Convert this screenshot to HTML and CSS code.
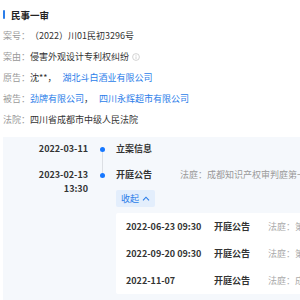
FILE: index.html
```html
<!DOCTYPE html>
<html lang="zh-CN">
<head>
    <meta charset="UTF-8">
    <title>民事一审</title>
    <link rel="stylesheet" href="styles.css">
</head>
<body>
    <div class="case">
        <div class="case-title">
            <span class="title-bar"></span>
            <h1>民事一审</h1>
        </div>

        <div class="info-row"><span class="label">案号：</span><span class="value">（2022）川01民初3296号</span></div>
        <div class="info-row">
            <span class="label">案由：</span><span class="value">侵害外观设计专利权纠纷</span>
            <svg class="info-icon" width="8" height="8" viewBox="0 0 8 8">
                <circle cx="4" cy="4" r="3.4" fill="none" stroke="#c8c8c8" stroke-width="0.8"/>
                <line x1="4" y1="3.4" x2="4" y2="6" stroke="#c8c8c8" stroke-width="0.8"/>
                <circle cx="4" cy="2.2" r="0.5" fill="#c8c8c8"/>
            </svg>
        </div>
        <div class="info-row"><span class="label">原告：</span><span class="value">沈**，</span><a class="link">湖北斗白酒业有限公司</a></div>
        <div class="info-row"><span class="label">被告：</span><a class="link">劲牌有限公司</a><span class="value">，</span><a class="link">四川永辉超市有限公司</a></div>
        <div class="info-row"><span class="label">法院：</span><span class="value">四川省成都市中级人民法院</span></div>

        <div class="timeline">
            <div class="event">
                <div class="event-date">2022-03-11</div>
                <div class="event-axis first">
                    <span class="axis-line top"></span>
                    <span class="axis-dot"></span>
                    <span class="axis-line bottom"></span>
                </div>
                <div class="event-body">
                    <div class="event-head"><span class="event-name">立案信息</span></div>
                </div>
            </div>

            <div class="event">
                <div class="event-date">2023-02-13<br>13:30</div>
                <div class="event-axis last">
                    <span class="axis-line top"></span>
                    <span class="axis-dot"></span>
                    <span class="axis-line bottom"></span>
                </div>
                <div class="event-body">
                    <div class="event-head">
                        <span class="event-name">开庭公告</span>
                        <span class="event-note">法庭：成都知识产权审判庭第一法庭</span>
                    </div>
                    <button class="collapse-btn">收起
                        <svg width="8" height="5" viewBox="0 0 8 5"><path d="M1 4.3 L4 1.2 L7 4.3" fill="none" stroke="#2b7de9" stroke-width="1.1"/></svg>
                    </button>
                    <div class="sub-list">
                        <div class="sub-row"><span class="sub-date">2022-06-23 09:30</span><span class="sub-name">开庭公告</span><span class="sub-note">法庭：第一法庭</span></div>
                        <div class="sub-row"><span class="sub-date">2022-09-20 09:30</span><span class="sub-name">开庭公告</span><span class="sub-note">法庭：第一法庭</span></div>
                        <div class="sub-row"><span class="sub-date">2022-11-07</span><span class="sub-name">开庭公告</span><span class="sub-note">法庭：成都知识产权</span></div>
                    </div>
                </div>
            </div>
        </div>
    </div>
</body>
</html>
```

FILE: styles.css
```css
* {
    margin: 0;
    padding: 0;
    box-sizing: border-box;
}

body {
    font-family: "Noto Sans CJK SC", "Noto Sans", sans-serif;
    font-size: 9px;
    color: #333;
    background: #fff;
    width: 300px;
    height: 300px;
    overflow: hidden;
}

.case {
    padding: 4px 0 0 3px;
    white-space: nowrap;
}

.case-title {
    display: flex;
    align-items: center;
    gap: 6px;
    height: 21px;
}

.title-bar {
    width: 2px;
    height: 9px;
    background: #2b7de9;
    border-radius: 1px;
}

.case-title h1 {
    font-size: 9.5px;
    font-weight: 700;
    color: #222;
}

.info-row {
    display: flex;
    align-items: center;
    line-height: 21px;
}

.label {
    color: #999;
}

.value {
    color: #333;
}

.link {
    color: #2b7de9;
    margin-left: 6px;
}

.info-row .label + .link {
    margin-left: 0;
}

.info-icon {
    margin-left: 3px;
}

.timeline {
    margin-top: 7px;
    background: #f5f8fc;
    padding-top: 5px;
    height: 170px;
}

.event {
    display: grid;
    grid-template-columns: 85px 28px 1fr;
    line-height: 14px;
}

.event-date {
    text-align: right;
    font-weight: 700;
    color: #333;
    padding-bottom: 12px;
}

.event-axis {
    display: flex;
    flex-direction: column;
    align-items: center;
}

.axis-dot {
    width: 5px;
    height: 5px;
    border-radius: 50%;
    background: #1677ff;
    flex-shrink: 0;
}

.axis-line {
    width: 1px;
    background: #dcdfe4;
}

.axis-line.top {
    height: 4.5px;
}

.axis-line.bottom {
    flex: 1;
}

.event-axis.first .axis-line.top,
.event-axis.last .axis-line.bottom {
    visibility: hidden;
}

.event-head {
    display: flex;
    gap: 28px;
}

.event-name {
    font-weight: 700;
    color: #333;
}

.event-note {
    color: #999;
}

.collapse-btn {
    display: inline-flex;
    align-items: center;
    gap: 3px;
    height: 17px;
    margin-top: 8px;
    padding: 0 5px;
    border: none;
    border-radius: 2px;
    background: #e3eefc;
    color: #2b7de9;
    font-family: inherit;
    font-size: 9px;
}

.sub-list {
    margin-top: 6px;
    width: 240px;
    background: #fff;
    border-radius: 2px;
}

.sub-row {
    display: grid;
    grid-template-columns: 88px 54px auto;
    align-items: center;
    height: 27px;
    padding-left: 10px;
}

.sub-date {
    font-weight: 700;
    color: #333;
}

.sub-name {
    font-weight: 700;
    color: #333;
}

.sub-note {
    color: #aaa;
}
```
